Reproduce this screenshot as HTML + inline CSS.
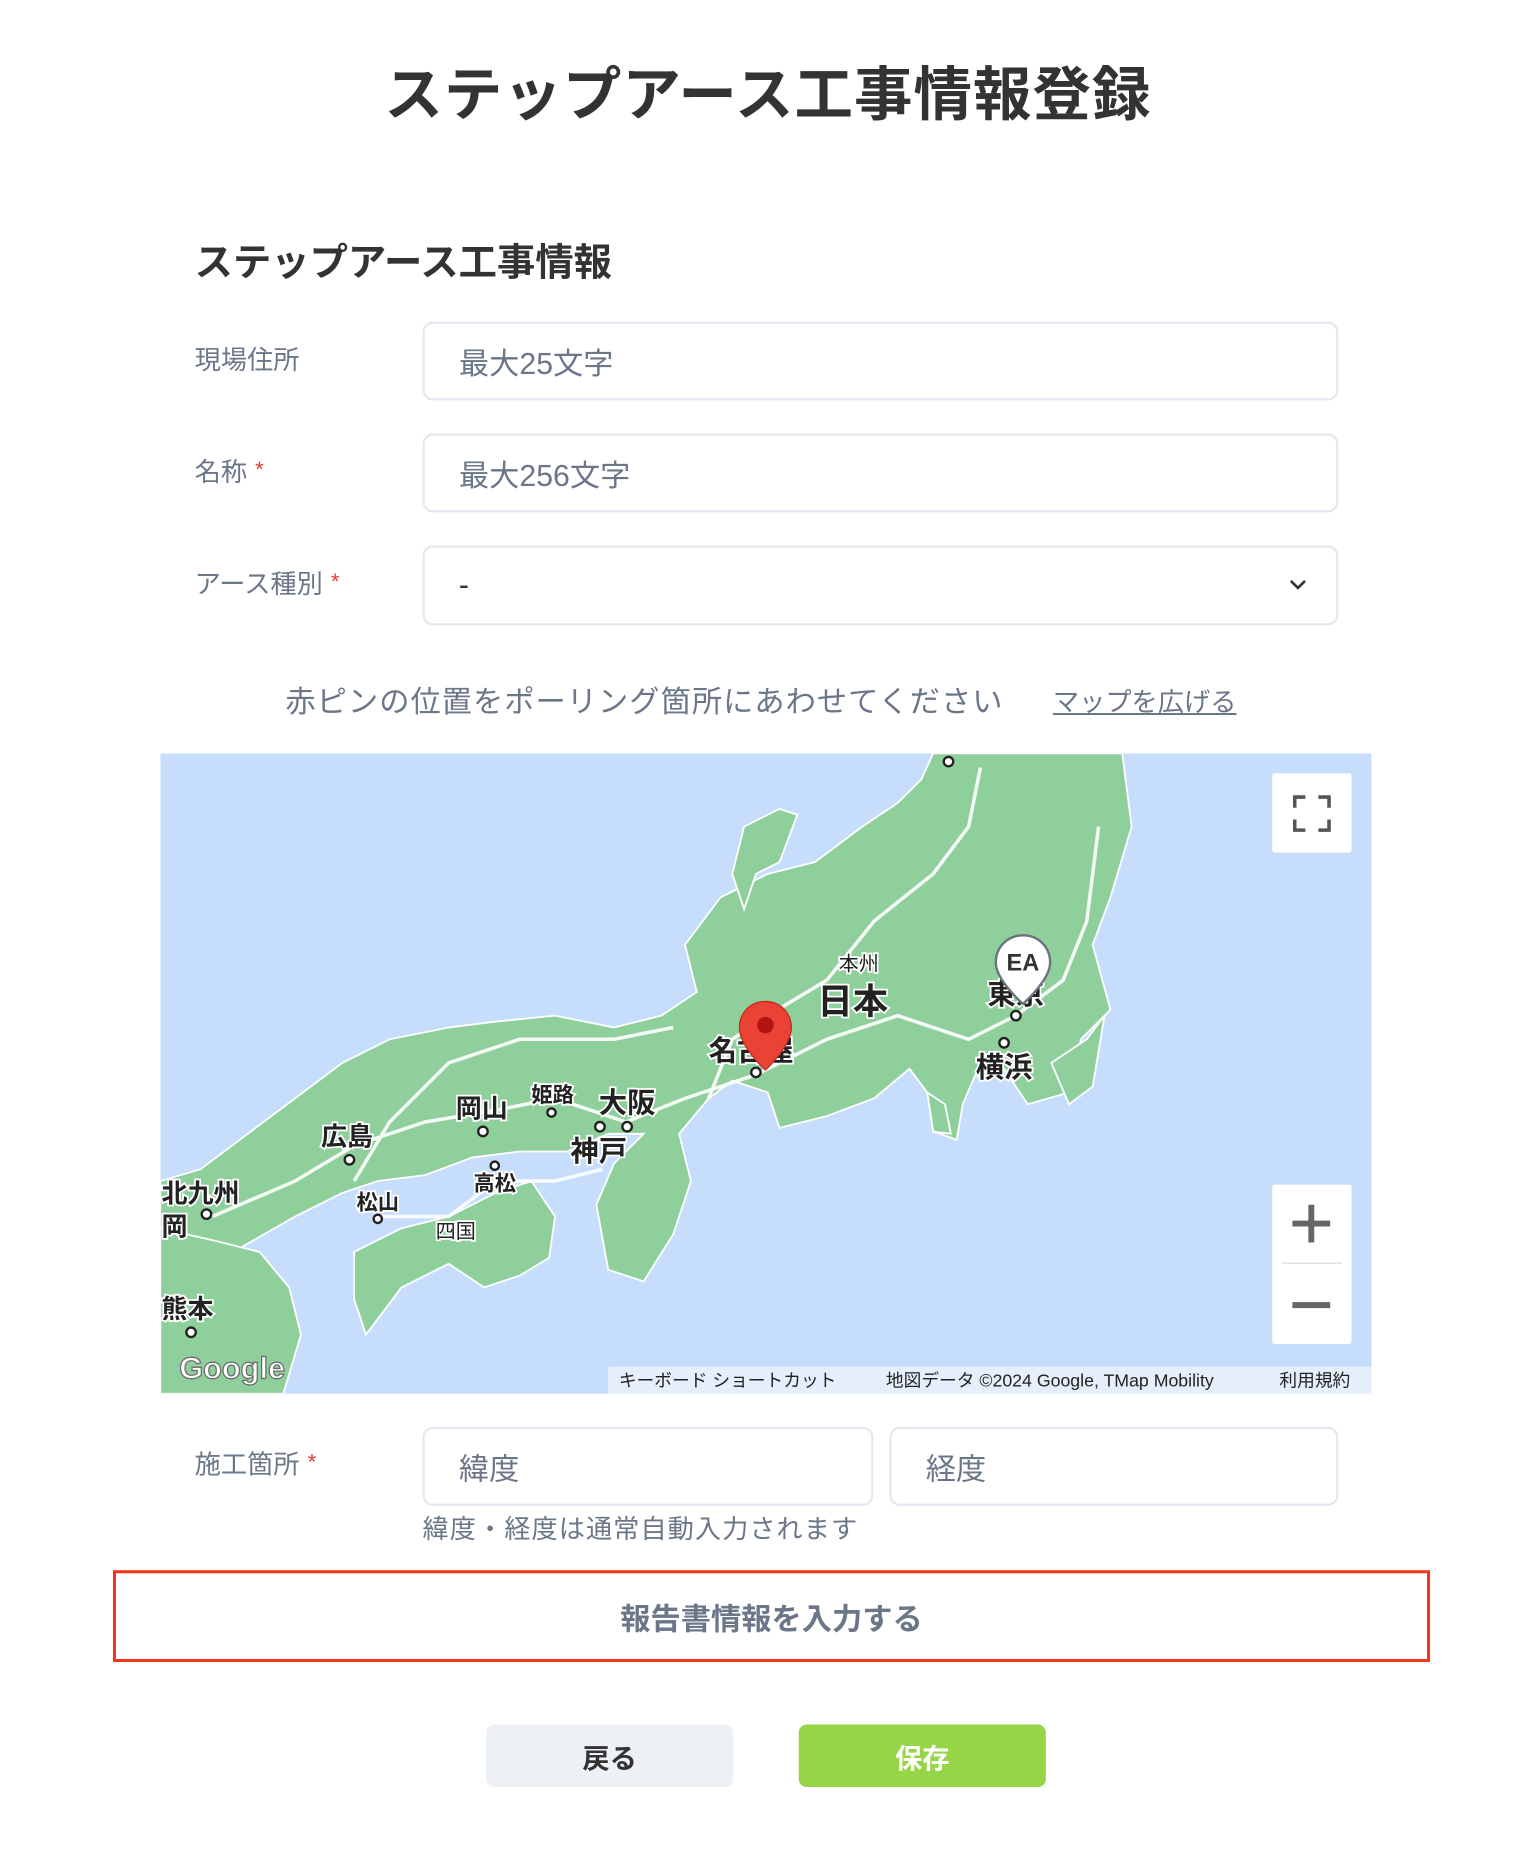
<!DOCTYPE html>
<html><head><meta charset="utf-8"><style>
*{margin:0;padding:0;box-sizing:border-box}
body{width:1523px;height:1851px;background:#fff;font-family:"Liberation Sans","Noto Sans CJK JP",sans-serif;position:relative;overflow:hidden;color:#374151}
#w{position:absolute;left:0;top:0;width:1523px;height:1851px;transform:scale(1.0085);transform-origin:0 0}
.a{position:absolute}
.title{top:47px;left:0;width:1523px;text-align:center;font-size:58px;font-weight:700;color:#333;letter-spacing:1px}
.h2{top:229px;left:193px;font-size:38px;font-weight:700;color:#333}
.lbl{left:193px;font-size:26px;color:#6b7789}
.lbl b{color:#e53935;font-weight:400;font-size:22px;margin-left:8px;vertical-align:4px}
.inp{border:2px solid #e2e6ee;border-radius:10px;background:#fff;font-size:30px;color:#6b7789;padding-left:34px;display:flex;align-items:center}
.btn{border-radius:8px;font-size:27px;font-weight:700;display:flex;align-items:center;justify-content:center}
</style></head><body><div id="w">
<div class="a title">ステップアース工事情報登録</div>
<div class="a h2">ステップアース工事情報</div>

<div class="a lbl" style="top:337px">現場住所</div>
<div class="a inp" style="left:419px;top:319px;width:908px;height:78px">最大25文字</div>
<div class="a lbl" style="top:448px">名称<b>*</b></div>
<div class="a inp" style="left:419px;top:430px;width:908px;height:78px">最大256文字</div>
<div class="a lbl" style="top:559px">アース種別<b>*</b></div>
<div class="a inp" style="left:419px;top:541px;width:908px;height:79px;color:#333">-
<svg class="a" style="right:28px;top:30px" width="20" height="14" viewBox="0 0 20 14"><path d="M3 3 L10 10 L17 3" fill="none" stroke="#333" stroke-width="2.6"/></svg></div>

<div class="a" style="top:671px;left:283px;font-size:30px;color:#6b7789;letter-spacing:1px">赤ピンの位置をポーリング箇所にあわせてください</div>
<div class="a" style="top:676px;left:1044px;font-size:26px;color:#6b7789;text-decoration:underline">マップを広げる</div>

<svg class="a" style="left:159px;top:747px" width="1201" height="635" viewBox="136 638 1025 542" preserveAspectRatio="none">
<rect x="136" y="638" width="1025" height="542" fill="#c6defb"/>
<g fill="#8fcf9c" stroke="#fff" stroke-width="1.5">
<path d="M790,638 L950,638 L958,700 L940,760 L925,800 L940,855 L915,880 L905,925 L870,935 L850,905 L830,900 L815,935 L810,965 L790,958 L785,925 L770,905 L740,930 L700,945 L660,955 L650,925 L620,915 L600,930 L575,960 L585,1000 L570,1045 L545,1085 L515,1075 L505,1020 L520,985 L545,960 L515,960 L480,975 L440,975 L400,980 L360,995 L320,1000 L290,1010 L250,1030 L215,1050 L180,1070 L136,1060 L136,1000 L170,990 L210,960 L250,930 L290,900 L330,880 L380,870 L420,865 L470,860 L520,870 L560,860 L590,840 L580,800 L610,760 L650,740 L690,730 L730,700 L760,680 L780,660 Z"/>
<path d="M630,700 L660,685 L675,690 L660,730 L640,740 L630,770 L620,740 Z"/>
<path d="M300,1060 L340,1040 L380,1030 L420,1010 L450,1000 L470,1030 L465,1065 L440,1080 L410,1090 L380,1070 L340,1090 L310,1130 L300,1100 Z"/>
<path d="M136,1040 L180,1050 L220,1060 L245,1090 L255,1130 L240,1180 L136,1180 Z"/>
<path d="M890,900 L920,880 L935,860 L925,920 L905,935 Z"/>
<path d="M785,925 L800,935 L805,960 L790,958 Z"/>
</g>
<g fill="none" stroke="#fff" stroke-width="3" opacity=".9">
<path d="M180,1030 L250,1000 L300,970 L360,950 L420,940 L470,930 L530,950 L580,930 L640,910 L700,880 L760,860 L820,880 L860,860 L900,830 L920,780 L930,700"/>
<path d="M600,930 L620,880 L650,860 L700,830 L740,780 L790,740 L820,700 L830,650"/>
<path d="M320,1030 L380,1030 L420,1000 L470,1000 L510,990"/>
<path d="M300,1000 L330,950 L380,900 L440,880 L520,880 L570,870"/>
</g>
<g font-family="Liberation Sans,Noto Sans CJK JP,sans-serif" fill="#222" font-weight="700" stroke="#fff" stroke-width="3" paint-order="stroke">
<text x="692" y="858" font-size="30">日本</text>
<text x="710" y="822" font-size="17" font-weight="400">本州</text>
<text x="600" y="898" font-size="24">名古屋</text>
<text x="826" y="912" font-size="24">横浜</text>
<text x="836" y="850" font-size="24">東京</text>
<text x="507" y="942" font-size="24">大阪</text>
<text x="483" y="983" font-size="24">神戸</text>
<text x="450" y="933" font-size="18">姫路</text>
<text x="386" y="946" font-size="22">岡山</text>
<text x="272" y="970" font-size="22">広島</text>
<text x="401" y="1008" font-size="18">高松</text>
<text x="302" y="1024" font-size="18">松山</text>
<text x="369" y="1048" font-size="17" font-weight="400">四国</text>
<text x="137" y="1018" font-size="22">北九州</text>
<text x="137" y="1046" font-size="22">岡</text>
<text x="137" y="1116" font-size="22">熊本</text>
</g>
<g fill="#fff" stroke="#222" stroke-width="2">
<circle cx="640" cy="908" r="4"/><circle cx="850" cy="883" r="4"/><circle cx="860" cy="860" r="4"/><circle cx="508" cy="954" r="4"/><circle cx="531" cy="954" r="4"/><circle cx="467" cy="942" r="3.5"/><circle cx="409" cy="958" r="4"/><circle cx="296" cy="982" r="4"/><circle cx="419" cy="987" r="3.5"/><circle cx="320" cy="1032" r="3.5"/><circle cx="175" cy="1028" r="4"/><circle cx="162" cy="1128" r="4"/><circle cx="803" cy="645" r="4"/>
</g>
<path d="M866,792 C852,792 843,803 843,815 C843,830 866,850 866,850 C866,850 889,830 889,815 C889,803 880,792 866,792Z" fill="#fff" stroke="#6b7280" stroke-width="2"/>
<text x="866" y="822" font-size="20" font-weight="700" fill="#333" text-anchor="middle" font-family="Liberation Sans,sans-serif">EA</text>
<path d="M648,848 C634,848 626,859 626,870 C626,886 648,906 648,906 C648,906 670,886 670,870 C670,859 662,848 648,848Z" fill="#ea4335" stroke="#c5221f" stroke-width="1"/>
<circle cx="648" cy="868" r="7" fill="#b31412"/>
<text x="152" y="1167" font-size="26" font-weight="700" fill="#fff" stroke="#666" stroke-width="1" font-family="Liberation Sans,sans-serif">Google</text>
<rect x="1077" y="655" width="67" height="67" fill="#fff" rx="2"/>
<path d="M1096,684 V675 H1105 M1116,675 H1125 V684 M1125,694 V703 H1116 M1105,703 H1096 V694" fill="none" stroke="#555" stroke-width="3"/>
<rect x="1077" y="1003" width="67" height="135" fill="#fff" rx="2"/>
<rect x="1085" y="1069" width="51" height="1" fill="#ddd"/>
<path d="M1094,1036 H1126 M1110,1020 V1052 M1094,1105 H1126" stroke="#666" stroke-width="5"/>
<rect x="515" y="1157" width="646" height="23" fill="#e8eff9" opacity=".9"/>
<g font-size="15" fill="#222" font-family="Liberation Sans,Noto Sans CJK JP,sans-serif">
<text x="524" y="1174">キーボード ショートカット</text>
<text x="750" y="1174">地図データ ©2024 Google, TMap Mobility</text>
<text x="1083" y="1174">利用規約</text>
</g>
</svg>

<div class="a lbl" style="top:1432px">施工箇所<b>*</b></div>
<div class="a inp" style="left:419px;top:1415px;width:447px;height:78px">緯度</div>
<div class="a inp" style="left:882px;top:1415px;width:445px;height:78px">経度</div>
<div class="a" style="left:419px;top:1496px;font-size:26px;color:#6b7789;letter-spacing:1px">緯度・経度は通常自動入力されます</div>

<div class="a" style="left:112px;top:1557px;width:1306px;height:91px;border:3px solid #f2351f;display:flex;align-items:center;justify-content:center;font-size:30px;font-weight:700;color:#6b7789">報告書情報を入力する</div>

<div class="a btn" style="left:482px;top:1710px;width:245px;height:62px;background:#edf1f5;color:#333">戻る</div>
<div class="a btn" style="left:792px;top:1710px;width:245px;height:62px;background:#96d548;color:#fff">保存</div>
</div></body></html>
